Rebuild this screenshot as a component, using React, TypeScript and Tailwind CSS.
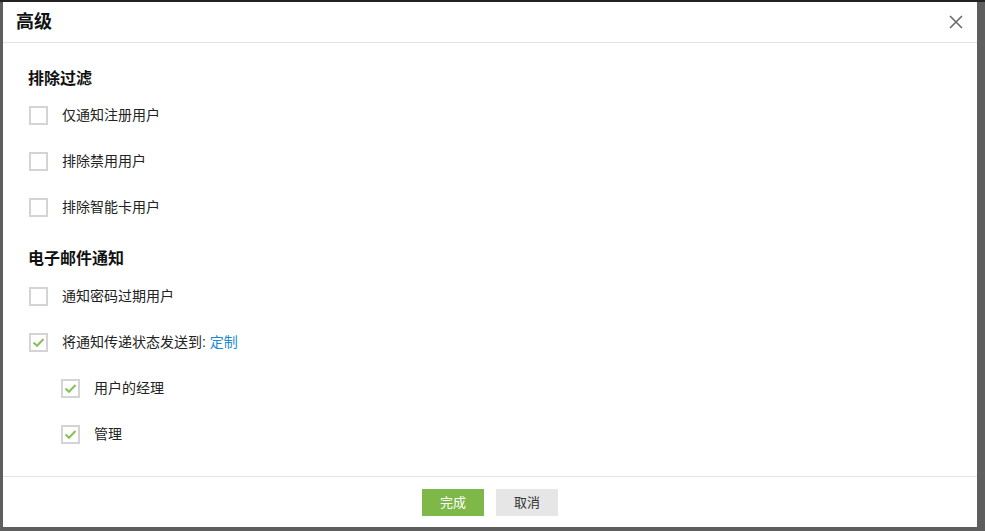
import React from "react";

const font = { fontFamily: '"Liberation Sans", "Noto Sans CJK SC", sans-serif' };

function Box({ checked }: { checked?: boolean }) {
  return (
    <span className="flex h-[19px] w-[19px] shrink-0 items-center justify-center border-2 border-[#d4d4d4] bg-white">
      {checked && (
        <svg width="13" height="11" viewBox="0 0 13 11">
          <path d="M1.5 5.5 L5 8.8 L11.5 2" fill="none" stroke="#86c15a" strokeWidth="2" />
        </svg>
      )}
    </span>
  );
}

function Row({ label, checked, indent, extra }: { label: string; checked?: boolean; indent?: boolean; extra?: React.ReactNode }) {
  return (
    <div className={`flex h-[46px] items-center ${indent ? "pl-[58px]" : "pl-[26px]"}`}>
      <Box checked={checked} />
      <span className="ml-[14px] whitespace-pre text-[14px] text-[#222]">
        {label}
        {extra}
      </span>
    </div>
  );
}

export default function App() {
  return (
    <div className="relative h-[531px] w-[985px] overflow-hidden bg-[#5e5e5e]" style={font}>
      <div className="h-[2px] bg-[#232323]" />
      <div className="flex">
        <div className="w-[3px] shrink-0" />
        <div className="flex h-[525px] w-[974px] flex-col bg-white">
          <div className="flex h-[41px] items-center justify-between border-b border-[#e3e3e3] pl-[13px] pr-[14px]">
            <span className="text-[18px] font-bold text-[#111]">高级</span>
            <svg width="14" height="14" viewBox="0 0 14 14">
              <path d="M1 1 L13 13 M13 1 L1 13" stroke="#6b6b6b" strokeWidth="1.6" />
            </svg>
          </div>
          <div className="flex-1 pt-[24px]">
            <div className="pl-[25px] text-[16px] font-bold leading-[24px] text-[#111]">排除过滤</div>
            <div className="mt-[1px]">
              <Row label="仅通知注册用户" />
              <Row label="排除禁用用户" />
              <Row label="排除智能卡用户" />
            </div>
            <div className="mt-[17px] pl-[25px] text-[16px] font-bold leading-[24px] text-[#111]">电子邮件通知</div>
            <div className="mt-[2px]">
              <Row label="通知密码过期用户" />
              <Row label="将通知传递状态发送到: " checked extra={<span className="text-[#1a8ad4]">定制</span>} />
              <Row label="用户的经理" checked indent />
              <Row label="管理" checked indent />
            </div>
          </div>
          <div className="flex h-[51px] items-center justify-center gap-[12px] border-t border-[#e3e3e3] pt-[1px]">
            <button className="h-[27px] w-[62px] bg-[#7db848] text-[13px] text-white">完成</button>
            <button className="h-[27px] w-[62px] bg-[#e6e6e6] text-[13px] text-[#333]">取消</button>
          </div>
        </div>
      </div>
    </div>
  );
}
